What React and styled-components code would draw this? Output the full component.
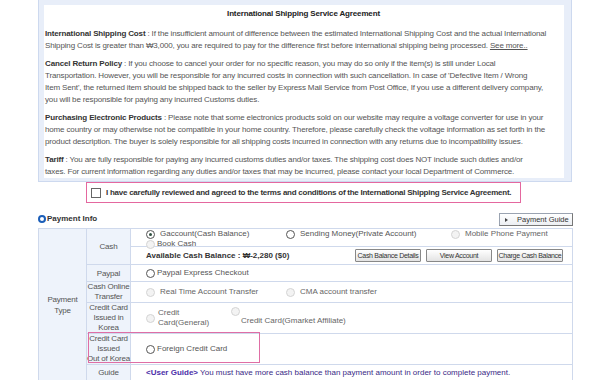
import React from "react";
import styled, { createGlobalStyle, css } from "styled-components";

const Global = createGlobalStyle`
  html, body {
    margin: 0;
    padding: 0;
    background: #fff;
    overflow: hidden;
  }
  body {
    font-family: "Liberation Sans", Arial, sans-serif;
    font-size: 8px;
    color: #555;
  }
`;

const Page = styled.div`
  width: 600px;
  height: 380px;
  padding-left: 38px;
  box-sizing: border-box;
`;

const AgreementBox = styled.div`
  width: 534px;
  box-sizing: border-box;
  background: #e8eef9;
  border: 1px solid #cdd9ef;
  border-top: 0;
  padding: 5px 7px 3px 5px;
`;

const AgreementInner = styled.div`
  background: #fff;
  padding: 3px 2px 0 1px;
  line-height: 12px;
  letter-spacing: -0.15px;
`;

const Title = styled.div`
  text-align: center;
  font-weight: bold;
  color: #222;
  margin-bottom: 8px;
`;

const Para = styled.p`
  margin: 0 0 6px;
  white-space: nowrap;
  &:last-child {
    margin-bottom: 0;
  }
  b {
    color: #333;
  }
`;

const More = styled.a`
  color: #555;
  text-decoration: underline;
`;

const ConsentRow = styled.div`
  display: flex;
  padding: 0 0 0 48px;
`;

const Consent = styled.label`
  display: flex;
  align-items: center;
  gap: 5px;
  width: 435px;
  height: 21px;
  box-sizing: border-box;
  border: 1px solid #e4679f;
  padding-left: 4px;
  font-weight: bold;
  color: #333;
  letter-spacing: -0.25px;
  white-space: nowrap;
`;

const Box = styled.span`
  width: 8px;
  height: 8px;
  border: 1px solid #666;
  background: #fff;
`;

const InfoBar = styled.div`
  display: flex;
  align-items: flex-end;
  justify-content: space-between;
  width: 535px;
  margin-top: 11px;
  height: 14px;
`;

const InfoTitle = styled.div`
  display: flex;
  align-items: center;
  gap: 1px;
  color: #333;
  font-weight: bold;
  align-self: flex-start;
`;

const Bullet = styled.span`
  width: 4px;
  height: 4px;
  border-radius: 50%;
  border: 2px solid #1b5eb8;
`;

const GuideButton = styled.button`
  display: flex;
  align-items: center;
  gap: 9px;
  width: 74px;
  height: 13px;
  padding: 0 0 0 5px;
  font: inherit;
  font-size: 7.5px;
  color: #333;
  border: 1px solid #9aa3b1;
  border-right-color: #777;
  border-bottom-color: #777;
  background: linear-gradient(#fff, #eceff3);
  margin-bottom: 2px;
  &::before {
    content: "";
    border-left: 3px solid #444;
    border-top: 2px solid transparent;
    border-bottom: 2px solid transparent;
  }
`;

const Table = styled.table`
  width: 535px;
  border-collapse: collapse;
  table-layout: fixed;
  td {
    border: 1px solid #cfd9ec;
    padding: 0;
  }
`;

const Label = styled.td`
  background: #eef3fb;
  text-align: center;
  line-height: ${p => p.lh || 11}px;
  letter-spacing: -0.2px;
  white-space: nowrap;
  color: #555;
  ${p =>
    p.marked &&
    css`
      position: relative;
      &::after {
        content: "";
        position: absolute;
        left: 1px;
        top: -2px;
        width: 170px;
        height: 29px;
        border: 1px solid #df6ea5;
        pointer-events: none;
      }
    `}
`;

const Cell = styled.td`
  background: #fff;
  height: ${p => p.h}px;
  padding-left: 15px !important;
  white-space: nowrap;
  ${p =>
    p.guide &&
    css`
      color: #3a2a86;
    `}
`;

const Options = styled.div`
  display: flex;
  flex-wrap: wrap;
  align-content: flex-start;
  line-height: 10px;
  height: ${p => (p.h ? `${p.h}px` : "auto")};
  padding-top: ${p => p.pt || 0}px;
  box-sizing: border-box;
`;

const Option = styled.div`
  display: flex;
  align-items: ${p => (p.top ? "flex-start" : "center")};
  gap: ${p => p.gap ?? 5}px;
  width: ${p => p.w}px;
  ${p =>
    p.disabled &&
    css`
      color: #666;
    `}
`;

const Radio = styled.span`
  flex: none;
  box-sizing: border-box;
  width: 9px;
  height: 9px;
  border-radius: 50%;
  border: 1px solid ${p => (p.disabled ? "#d4d4d4" : "#555")};
  background: ${p => (p.disabled ? "#f3f3f3" : "#fff")};
  position: relative;
  margin-top: ${p => p.mt || 0}px;
  ${p =>
    p.checked &&
    css`
      &::after {
        content: "";
        position: absolute;
        left: 2px;
        top: 2px;
        width: 3px;
        height: 3px;
        border-radius: 50%;
        background: #2f4f3f;
      }
    `}
`;

const Shifted = styled.span`
  margin-top: ${p => p.mt || 0}px;
`;

const BalanceRow = styled.div`
  display: flex;
  align-items: center;
  justify-content: space-between;
  padding-right: 9px;
  font-weight: bold;
  color: #333;
`;

const Buttons = styled.div`
  display: flex;
  gap: 5px;
`;

const SmallButton = styled.button`
  width: ${p => p.w}px;
  height: 13px;
  padding: 0;
  font: inherit;
  font-weight: normal;
  font-size: 7px;
  letter-spacing: -0.3px;
  white-space: nowrap;
  color: #333;
  border: 1px solid #888;
  border-radius: 1px;
  background: linear-gradient(#fff, #e3e3e3);
`;

const UserGuide = styled.b`
  color: #4b2fa8;
`;

export default function App() {
  return (
    <Page>
      <Global />
      <AgreementBox>
        <AgreementInner>
          <Title>International Shipping Service Agreement</Title>
          <Para>
            <b>International Shipping Cost</b> : If the insufficient amount of difference between the estimated International Shipping Cost and the actual International
            <br />
            Shipping Cost is greater than ₩3,000, you are required to pay for the difference first before international shipping being processed. <More>See more..</More>
          </Para>
          <Para>
            <b>Cancel Return Policy</b> : If you choose to cancel your order for no specific reason, you may do so only if the item(s) is still under Local
            <br />
            Transportation. However, you will be responsible for any incurred costs in connection with such cancellation. In case of 'Defective Item / Wrong
            <br />
            Item Sent', the returned item should be shipped back to the seller by Express Mail Service from Post Office, If you use a different delivery company,
            <br />
            you will be responsible for paying any incurred Customs duties.
          </Para>
          <Para>
            <b>Purchasing Electronic Products</b> : Please note that some electronics products sold on our website may require a voltage converter for use in your
            <br />
            home country or may otherwise not be compatible in your home country. Therefore, please carefully check the voltage information as set forth in the
            <br />
            product description. The buyer is solely responsible for all shipping costs incurred in connection with any returns due to incompatibility issues.
          </Para>
          <Para>
            <b>Tariff</b> : You are fully responsible for paying any incurred customs duties and/or taxes. The shipping cost does NOT include such duties and/or
            <br />
            taxes. For current information regarding any duties and/or taxes that may be incurred, please contact your local Department of Commerce.
          </Para>
        </AgreementInner>
      </AgreementBox>

      <ConsentRow>
        <Consent>
          <Box />
          I have carefully reviewed and agreed to the terms and conditions of the International Shipping Service Agreement.
        </Consent>
      </ConsentRow>

      <InfoBar>
        <InfoTitle>
          <Bullet />
          Payment Info
        </InfoTitle>
        <GuideButton>Payment Guide</GuideButton>
      </InfoBar>

      <Table>
        <colgroup>
          <col style={{ width: 48 }} />
          <col style={{ width: 44 }} />
          <col />
        </colgroup>
        <tbody>
          <tr>
            <Label rowSpan={8}>
              Payment
              <br />
              Type
            </Label>
            <Label rowSpan={2}>Cash</Label>
            <Cell h={17}>
              <Options h={17}>
                <Option w={140}>
                  <Radio checked />
                  Gaccount(Cash Balance)
                </Option>
                <Option w={165}>
                  <Radio />
                  Sending Money(Private Account)
                </Option>
                <Option w={120} disabled>
                  <Radio disabled />
                  Mobile Phone Payment
                </Option>
                <Option w={100} gap={2}>
                  <Radio disabled />
                  Book Cash
                </Option>
              </Options>
            </Cell>
          </tr>
          <tr>
            <Cell h={17}>
              <BalanceRow>
                Available Cash Balance : ₩-2,280 ($0)
                <Buttons>
                  <SmallButton w={66}>Cash Balance Details</SmallButton>
                  <SmallButton w={66}>View Account</SmallButton>
                  <SmallButton w={66}>Charge Cash Balance</SmallButton>
                </Buttons>
              </BalanceRow>
            </Cell>
          </tr>
          <tr>
            <Label>Paypal</Label>
            <Cell h={16}>
              <Options>
                <Option w={200} gap={2}>
                  <Radio />
                  Paypal Express Checkout
                </Option>
              </Options>
            </Cell>
          </tr>
          <tr>
            <Label lh={10}>
              Cash Online
              <br />
              Transfer
            </Label>
            <Cell h={18}>
              <Options>
                <Option w={140} disabled>
                  <Radio disabled />
                  Real Time Account Transfer
                </Option>
                <Option w={160} disabled>
                  <Radio disabled />
                  CMA account transfer
                </Option>
              </Options>
            </Cell>
          </tr>
          <tr>
            <Label lh={10}>
              Credit Card
              <br />
              Issued in
              <br />
              Korea
            </Label>
            <Cell h={30}>
              <Options>
                <Option w={85} top gap={3} disabled>
                  <Radio disabled mt={6} />
                  <span>
                    Credit
                    <br />
                    Card(General)
                  </span>
                </Option>
                <Option w={180} top gap={1} disabled>
                  <Radio disabled mt={-1} />
                  <Shifted mt={8}>Credit Card(Gmarket Affiliate)</Shifted>
                </Option>
              </Options>
            </Cell>
          </tr>
          <tr>
            <Label lh={10} marked>
              Credit Card
              <br />
              Issued
              <br />
              Out of Korea
            </Label>
            <Cell h={29}>
              <Options>
                <Option w={200} gap={2}>
                  <Radio />
                  Foreign Credit Card
                </Option>
              </Options>
            </Cell>
          </tr>
          <tr>
            <Label>Guide</Label>
            <Cell h={15} guide>
              <UserGuide>&lt;User Guide&gt;</UserGuide> You must have more cash balance than payment amount in order to complete payment.
            </Cell>
          </tr>
        </tbody>
      </Table>
    </Page>
  );
}
